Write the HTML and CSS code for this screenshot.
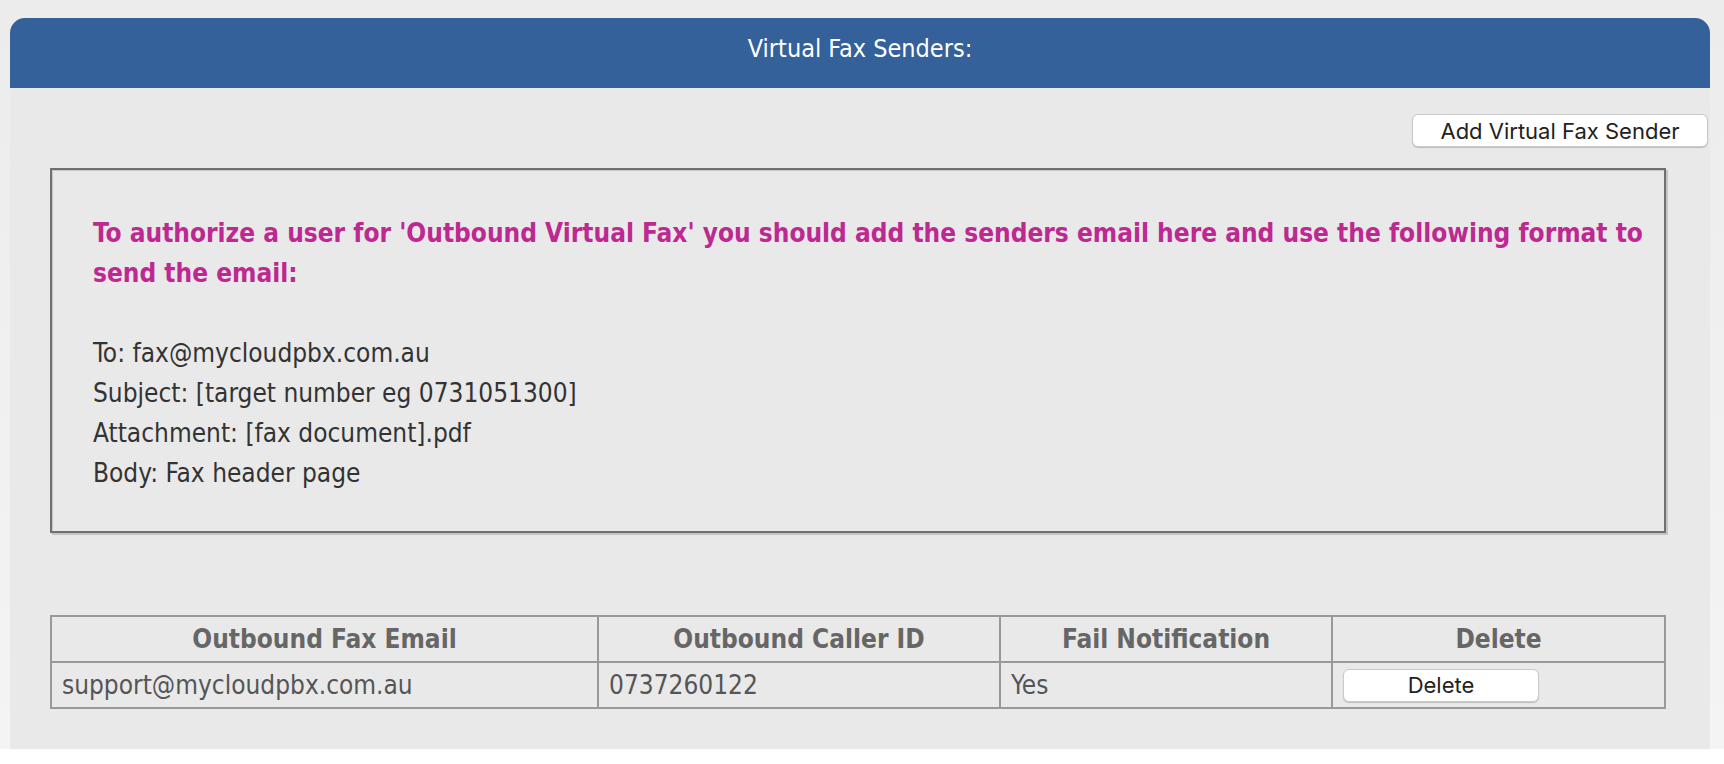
FILE: index.html
```html
<!DOCTYPE html>
<html lang="en">
<head>
<meta charset="utf-8">
<title>Virtual Fax Senders</title>
<link rel="stylesheet" href="styles.css">
</head>
<body>
<div class="page">
  <section class="panel">
    <header class="panel-head">Virtual Fax Senders:</header>
    <div class="panel-body">
      <div class="actions">
        <button class="btn btn-add" type="button">Add Virtual Fax Sender</button>
      </div>
      <div class="info-box">
        <p class="notice">To authorize a user for 'Outbound Virtual Fax' you should add the senders email here and use the following format to send the email:</p>
        <p class="format">To: fax@mycloudpbx.com.au<br>Subject: [target number eg 0731051300]<br>Attachment: [fax document].pdf<br>Body: Fax header page</p>
      </div>
      <table class="senders">
        <colgroup>
          <col class="c-email">
          <col class="c-caller">
          <col class="c-fail">
          <col class="c-del">
        </colgroup>
        <thead>
          <tr>
            <th>Outbound Fax Email</th>
            <th>Outbound Caller ID</th>
            <th>Fail Notification</th>
            <th>Delete</th>
          </tr>
        </thead>
        <tbody>
          <tr>
            <td>support@mycloudpbx.com.au</td>
            <td>0737260122</td>
            <td>Yes</td>
            <td><button class="btn btn-del" type="button">Delete</button></td>
          </tr>
        </tbody>
      </table>
    </div>
  </section>
</div>
</body>
</html>
```
FILE: styles.css
```css
* { box-sizing: border-box; }

html, body {
  margin: 0;
  padding: 0;
  background: #ffffff;
}

body {
  font-family: "DejaVu Sans Condensed", "DejaVu Sans", sans-serif;
  font-stretch: condensed;
  font-size: 26px;
  color: #333333;
}

.page {
  background: linear-gradient(to bottom, #ececec 0%, #f4f4f4 100%);
  padding: 18px 14px 0 10px;
}

.panel {
  background: #e9e9e9;
  border-radius: 15px 15px 0 0;
}

.panel-head {
  height: 70px;
  line-height: 62px;
  background: #346199;
  color: #ffffff;
  text-align: center;
  font-size: 25px;
  border-radius: 15px 15px 0 0;
}

.panel-body {
  padding: 26px 2px 40px 40px;
}

.actions {
  display: flex;
  justify-content: flex-end;
}

.btn {
  font-family: Inter, "DejaVu Sans", sans-serif;
  font-stretch: normal;
  color: #222222;
  background: #ffffff;
  border: 1px solid #c9c9c9;
  border-radius: 6px;
  box-shadow: 0 1px 1px rgba(0, 0, 0, 0.18);
  padding: 0;
  margin: 0;
  cursor: pointer;
}

.btn-add {
  width: 296px;
  height: 33px;
  font-size: 22px;
}

.info-box {
  margin: 21px 42px 0 0;
  border: 2px solid #707070;
  box-shadow: 2px 2px 0 #c4c4c4, inset 1px 1px 0 #c6c6c6;
  padding: 43px 6px 38px 41px;
  line-height: 40px;
}

.info-box p {
  margin: 0;
}

.notice {
  color: #bd2891;
  font-weight: bold;
  margin-bottom: 40px !important;
}

.format {
  color: #333333;
}

.senders {
  margin-top: 82px;
  width: 1614px;
  table-layout: fixed;
  border-collapse: collapse;
  color: #555555;
}

.c-email { width: 547px; }
.c-caller { width: 402px; }
.c-fail { width: 332px; }
.c-del { width: 333px; }

.senders th,
.senders td {
  border: 2px solid #999999;
  padding: 0 10px;
  white-space: nowrap;
}

.senders th {
  height: 46px;
  line-height: 44px;
  font-weight: bold;
  color: #666666;
  text-align: center;
}

.senders td {
  height: 46px;
  line-height: 44px;
  text-align: left;
  vertical-align: middle;
}

.btn-del {
  display: block;
  width: 196px;
  height: 33px;
  font-size: 22px;
}
```
